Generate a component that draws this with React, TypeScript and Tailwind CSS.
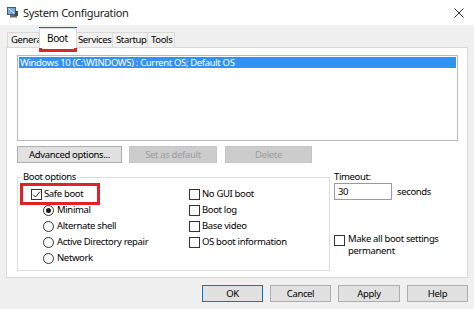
import React from "react";

function Box({ checked }: { checked?: boolean }) {
  return (
    <span className="w-[11px] h-[11px] border border-[#333333] bg-white flex items-center justify-center shrink-0">
      {checked && (
        <svg width="9" height="9" viewBox="0 0 9 9">
          <path d="M1 4.6 L3.4 7 L8 1.6" stroke="#222222" fill="none" strokeWidth="1" />
        </svg>
      )}
    </span>
  );
}

function Radio({ checked }: { checked?: boolean }) {
  return (
    <span className="w-[11px] h-[11px] rounded-full border border-[#333333] bg-white flex items-center justify-center shrink-0">
      {checked && <span className="w-[5px] h-[5px] rounded-full bg-[#1a1a1a]" />}
    </span>
  );
}

function Btn({
  children,
  w,
  disabled,
  focused,
}: {
  children: React.ReactNode;
  w: string;
  disabled?: boolean;
  focused?: boolean;
}) {
  const base = "h-[17px] flex items-center justify-center shrink-0 ";
  let cls = "bg-[#e1e1e1] border border-[#adadad] text-black";
  if (disabled) cls = "bg-[#cccccc] border border-[#c4c4c4] text-[#9d9d9d]";
  if (focused) cls = "bg-[#e1e1e1] border border-[#0078d7] text-black";
  return <div className={base + cls + " " + w}>{children}</div>;
}

export default function App() {
  return (
    <div className="w-[474px] h-[309px] bg-[#f0f0f0] relative overflow-hidden text-black font-['Noto_Sans',sans-serif] text-[9.5px] tracking-[-0.35px] leading-[12px]">
      {/* Title bar */}
      <div className="h-[25px] bg-white flex items-center pl-[7px] pr-[10px]">
        <svg width="11" height="11" viewBox="0 0 11 11">
          <rect x="0.5" y="0.5" width="8" height="7" fill="#7aa7d8" stroke="#3a5f8f" strokeWidth="1" />
          <path d="M1.5 1.5 L7.5 6.5" stroke="#dbe9f7" strokeWidth="1" />
          <rect x="3" y="8" width="7" height="2.5" fill="#6b6b6b" />
          <rect x="8" y="4" width="3" height="5" fill="#4a4a4a" />
        </svg>
        <span className="ml-[5px] text-[11px] tracking-[-0.3px] text-[#1a1a1a]">System Configuration</span>
        <svg className="ml-auto" width="10" height="10" viewBox="0 0 10 10">
          <path d="M0.5 0.5 L9.5 9.5 M9.5 0.5 L0.5 9.5" stroke="#333333" strokeWidth="1" />
        </svg>
      </div>

      {/* Tab strip */}
      <div className="h-[22px] flex items-end pl-[7px]">
        <div className="w-[32px] h-[15px] border-t border-l border-[#d9d9d9] flex items-center pl-[3px]">General</div>
        <div className="relative z-10 w-[38px] h-[20px] -mb-[1px] bg-white border-t border-l border-r border-[#d9d9d9] flex items-start pt-[3px] pl-[7px] text-[10px]">
          Boot
        </div>
        <div className="w-[35px] h-[15px] border-t border-[#d9d9d9] flex items-center pl-[1px]">Services</div>
        <div className="w-[35px] h-[15px] border-t border-l border-[#d9d9d9] flex items-center pl-[3px]">Startup</div>
        <div className="w-[28px] h-[15px] border-t border-l border-r border-[#d9d9d9] flex items-center pl-[3px]">Tools</div>
      </div>

      {/* Panel */}
      <div className="ml-[6px] w-[462px] h-[231px] bg-white border border-[#d9d9d9] pl-[10px] pt-[7px]">
        <div className="w-[441px] h-[86px] border border-[#b9b9b9] bg-white pt-[1px] px-[1px]">
          <div className="h-[11px] bg-[#3391f2] text-white flex items-center pl-[1px] leading-[11px]">
            Windows 10 (C:\WINDOWS) : Current OS; Default OS
          </div>
        </div>

        <div className="flex mt-[5px]">
          <Btn w="w-[105px]">Advanced options...</Btn>
          <div className="ml-[7px]">
            <Btn w="w-[88px]" disabled>
              Set as default
            </Btn>
          </div>
          <div className="ml-[8px]">
            <Btn w="w-[87px]" disabled>
              Delete
            </Btn>
          </div>
        </div>

        <div className="flex mt-[8px]">
          <fieldset className="w-[313px] h-[100px] border border-[#dcdcdc] p-0 m-0">
            <legend className="ml-[4px] px-[1px] leading-[12px]">Boot options</legend>
            <div className="flex pl-[13px] pt-[3px]">
              <div className="w-[158px] flex flex-col">
                <div className="h-[16px] flex items-center gap-[1px]">
                  <Box checked />
                  <span className="ml-[1px]">Safe boot</span>
                </div>
                {["Minimal", "Alternate shell", "Active Directory repair", "Network"].map((t, i) => (
                  <div key={t} className="h-[16px] flex items-center pl-[12px] gap-[3px]">
                    <Radio checked={i === 0} />
                    <span>{t}</span>
                  </div>
                ))}
              </div>
              <div className="flex flex-col">
                {["No GUI boot", "Boot log", "Base video", "OS boot information"].map((t) => (
                  <div key={t} className="h-[16px] flex items-center gap-[2px]">
                    <Box />
                    <span>{t}</span>
                  </div>
                ))}
              </div>
            </div>
          </fieldset>

          <div className="ml-[4px] flex flex-col">
            <div className="h-[12px]">Timeout:</div>
            <div className="flex items-center">
              <div className="w-[58px] h-[17px] border border-[#9a9a9a] bg-white flex items-center pl-[3px]">30</div>
              <span className="ml-[5px]">seconds</span>
            </div>
            <div className="flex items-start mt-[35px] gap-[3px]">
              <Box />
              <div className="flex flex-col -mt-[2px]">
                <span className="leading-[12px]">Make all boot settings</span>
                <span className="leading-[12px]">permanent</span>
              </div>
            </div>
          </div>
        </div>
      </div>

      {/* Bottom buttons */}
      <div className="flex justify-end gap-[7px] pr-[6px] mt-[7px]">
        <Btn w="w-[61px]" focused>
          OK
        </Btn>
        <Btn w="w-[61px]">Cancel</Btn>
        <Btn w="w-[62px]">Apply</Btn>
        <Btn w="w-[61px]">Help</Btn>
      </div>

      {/* Red highlight boxes */}
      <div className="absolute left-[39px] top-[27px] w-[38px] h-[25px] border-[3px] border-[#e0222b] pointer-events-none" />
      <div className="absolute left-[20px] top-[183px] w-[80px] h-[22px] border-[3px] border-[#e0222b] pointer-events-none" />
    </div>
  );
}
